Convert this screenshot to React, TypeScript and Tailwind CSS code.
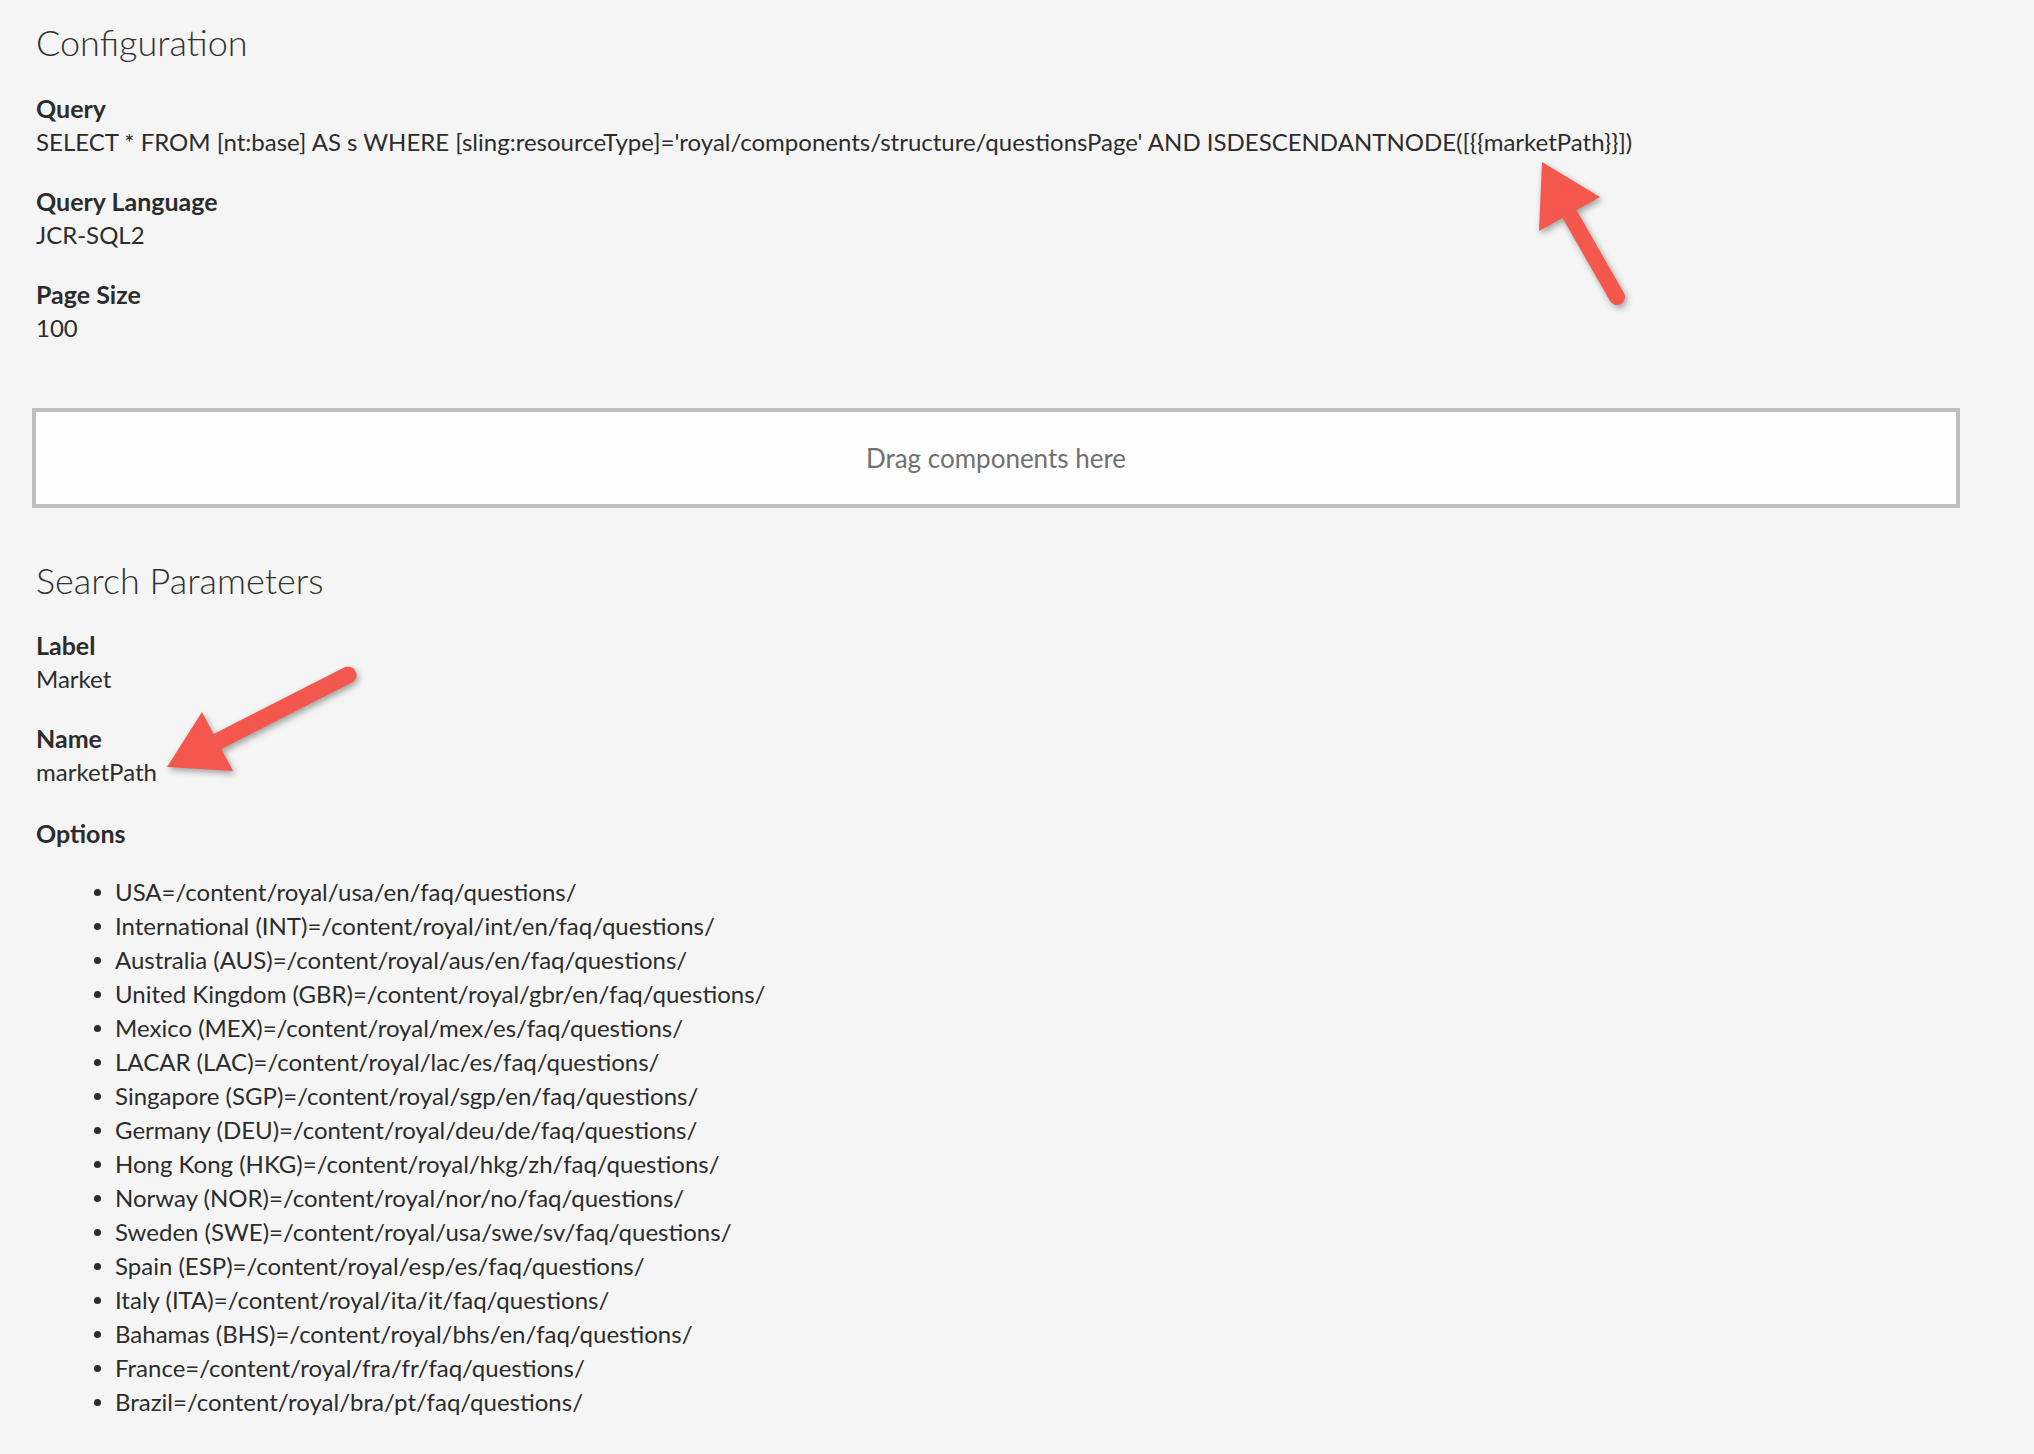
import React from 'react';

const OPTIONS = [
  'USA=/content/royal/usa/en/faq/questions/',
  'International (INT)=/content/royal/int/en/faq/questions/',
  'Australia (AUS)=/content/royal/aus/en/faq/questions/',
  'United Kingdom (GBR)=/content/royal/gbr/en/faq/questions/',
  'Mexico (MEX)=/content/royal/mex/es/faq/questions/',
  'LACAR (LAC)=/content/royal/lac/es/faq/questions/',
  'Singapore (SGP)=/content/royal/sgp/en/faq/questions/',
  'Germany (DEU)=/content/royal/deu/de/faq/questions/',
  'Hong Kong (HKG)=/content/royal/hkg/zh/faq/questions/',
  'Norway (NOR)=/content/royal/nor/no/faq/questions/',
  'Sweden (SWE)=/content/royal/usa/swe/sv/faq/questions/',
  'Spain (ESP)=/content/royal/esp/es/faq/questions/',
  'Italy (ITA)=/content/royal/ita/it/faq/questions/',
  'Bahamas (BHS)=/content/royal/bhs/en/faq/questions/',
  'France=/content/royal/fra/fr/faq/questions/',
  'Brazil=/content/royal/bra/pt/faq/questions/',
];

function Field({ label, value, last }: { label: string; value: string; last?: boolean }) {
  return (
    <div className={last ? '' : 'mb-[25px]'}>
      <div className="text-[25px] leading-[34px] font-bold text-[#2c2c2c]">{label}</div>
      <div className="text-[24px] leading-[34px] text-[#2c2c2c] whitespace-nowrap">{value}</div>
    </div>
  );
}

function Arrow({ tip, c1, c2, tail, width }: {
  tip: [number, number]; c1: [number, number]; c2: [number, number]; tail: [number, number]; width: number;
}) {
  const bx = (c1[0] + c2[0]) / 2;
  const by = (c1[1] + c2[1]) / 2;
  return (
    <g>
      <line x1={bx} y1={by} x2={tail[0]} y2={tail[1]} stroke="#f4584c" strokeWidth={width} strokeLinecap="round" />
      <polygon points={`${tip[0]},${tip[1]} ${c1[0]},${c1[1]} ${c2[0]},${c2[1]}`} fill="#f4584c" strokeLinejoin="round" />
    </g>
  );
}

export default function App() {
  return (
    <div className="relative min-h-[1454px] bg-[#f5f5f5] font-['Lato',sans-serif] text-[#2c2c2c]">
      <div className="pl-[36px] pt-[20px] pr-[74px]">
        <h2 className="text-[36px] leading-[44px] font-light text-[#323232] mb-[27px]">Configuration</h2>
        <Field
          label="Query"
          value="SELECT * FROM [nt:base] AS s WHERE [sling:resourceType]='royal/components/structure/questionsPage' AND ISDESCENDANTNODE([{{marketPath}}])"
        />
        <Field label="Query Language" value="JCR-SQL2" />
        <Field label="Page Size" value="100" last />
      </div>

      <div className="mt-[63px] ml-[32px] mr-[74px] h-[100px] border-[4px] border-[#bebebe] bg-[#fefefe] flex items-center justify-center">
        <span className="text-[26px] text-[#707070]">Drag components here</span>
      </div>

      <div className="pl-[36px] pt-[50px]">
        <h2 className="text-[36px] leading-[44px] font-light text-[#323232] mb-[26px]">Search Parameters</h2>
        <Field label="Label" value="Market" />
        <Field label="Name" value="marketPath" />
        <div className="mt-[27px] text-[25px] leading-[34px] font-bold">Options</div>
        <ul className="mt-[25px] pl-[58px]">
          {OPTIONS.map((o) => (
            <li key={o} className="flex items-center h-[34px] text-[24px]">
              <span className="w-[7px] h-[7px] rounded-full bg-[#2c2c2c] mr-[14px] shrink-0" />
              <span className="whitespace-nowrap">{o}</span>
            </li>
          ))}
        </ul>
      </div>

      <svg
        className="absolute inset-0 pointer-events-none"
        width="2034"
        height="1454"
        style={{ filter: 'drop-shadow(2px 3px 3px rgba(0,0,0,0.35))' }}
      >
        <Arrow tip={[1542, 162]} c1={[1600, 197]} c2={[1539, 231]} tail={[1617, 297]} width={16} />
        <Arrow tip={[167, 767]} c1={[202, 712]} c2={[233, 771]} tail={[348, 675]} width={17} />
      </svg>
    </div>
  );
}
